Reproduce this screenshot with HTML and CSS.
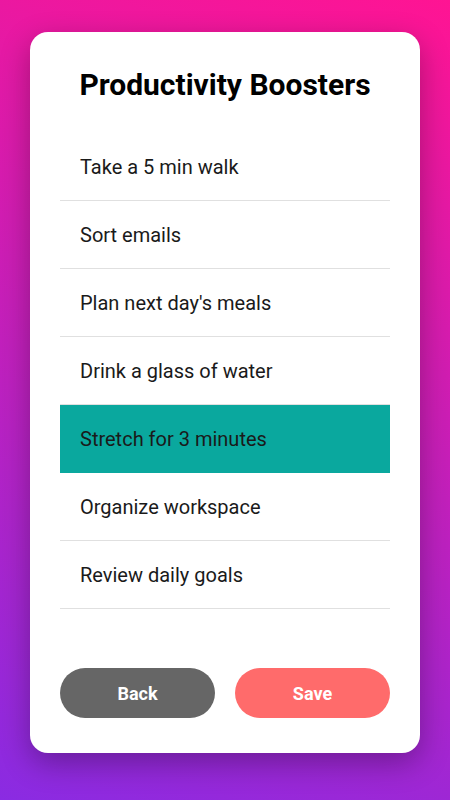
FILE: index.html
```html
<!DOCTYPE html>
<html>
<head>
  <meta charset="UTF-8">
  <title>Productivity Boosters</title>
  <link rel="stylesheet" href="styles.css">
</head>
<body>

<div class="card">
  <h1 class="title">Productivity Boosters</h1>
  <ul class="tasks">
    <li>Take a 5 min walk</li>
    <li>Sort emails</li>
    <li>Plan next day's meals</li>
    <li>Drink a glass of water</li>
    <li class="selected">Stretch for 3 minutes</li>
    <li>Organize workspace</li>
    <li>Review daily goals</li>
  </ul>
  <div class="actions">
    <button class="btn back">Back</button>
    <button class="btn save">Save</button>
  </div>
</div>

</body>
</html>
```

FILE: styles.css
```css
html, body {
  height: 100%;
}
body {
  margin: 0;
  font-family: Roboto, "Noto Sans", sans-serif;
  background: linear-gradient(200deg, #ff1493, #8a2be2);
  padding: 32px 30px;
  box-sizing: border-box;
}
.card {
  background: white;
  border-radius: 18px;
  padding: 35px 30px 35px;
  box-shadow: 0 10px 30px rgba(0, 0, 0, 0.3);
}
.title {
  margin: 0;
  font-size: 30px;
  font-weight: bold;
  color: #000;
  text-align: center;
}
.tasks {
  list-style: none;
  margin: 31px 0 0;
  padding: 0;
}
.tasks li {
  height: 67px;
  line-height: 69px;
  padding-left: 20px;
  font-size: 20px;
  color: #1a1a1a;
  border-bottom: 1px solid #e0e0e0;
}
.tasks li.selected {
  background: #0aa89e;
  border-bottom-color: #0aa89e;
}
.actions {
  display: flex;
  gap: 20px;
  margin-top: 59px;
}
.btn {
  flex: 1;
  height: 50px;
  border: none;
  border-radius: 25px;
  color: white;
  font-family: Roboto, sans-serif;
  font-size: 18px;
  font-weight: bold;
}
.back {
  background: #666;
}
.save {
  background: #ff6b6b;
}
```
